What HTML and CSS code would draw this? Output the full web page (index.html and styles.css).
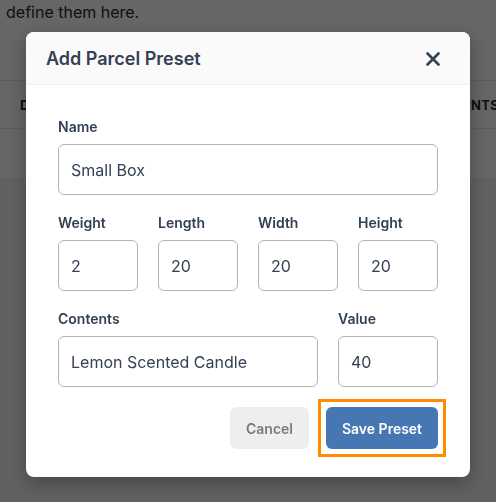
FILE: index.html
```html
<!DOCTYPE html>
<html>
<head>
<meta charset="utf-8">
<link rel="stylesheet" href="styles.css">
</head>
<body>
<div class="page">
  <p class="intro">define them here.</p>
  <div class="table">
    <div class="thead">
      <span>DIMENSIONS</span>
      <span class="last">CONTENTS</span>
    </div>
    <div class="trow"></div>
  </div>
</div>

<div class="overlay">
  <div class="modal">
    <div class="modal-header">
      <h2 class="modal-title">Add Parcel Preset</h2>
      <button class="close" aria-label="Close">
        <svg width="14" height="14" viewBox="0 0 14 14"><path d="M1.5 1.5 L12.5 12.5 M12.5 1.5 L1.5 12.5" stroke="#344054" stroke-width="2.6" stroke-linecap="round" fill="none"/></svg>
      </button>
    </div>
    <div class="modal-body">
      <div class="field">
        <label class="label">Name</label>
        <div class="input">Small Box</div>
      </div>
      <div class="grid4">
        <div class="field">
          <label class="label">Weight</label>
          <div class="input">2</div>
        </div>
        <div class="field">
          <label class="label">Length</label>
          <div class="input">20</div>
        </div>
        <div class="field">
          <label class="label">Width</label>
          <div class="input">20</div>
        </div>
        <div class="field">
          <label class="label">Height</label>
          <div class="input">20</div>
        </div>
      </div>
      <div class="grid2">
        <div class="field">
          <label class="label">Contents</label>
          <div class="input">Lemon Scented Candle</div>
        </div>
        <div class="field">
          <label class="label">Value</label>
          <div class="input">40</div>
        </div>
      </div>
      <div class="actions">
        <button class="btn btn-cancel">Cancel</button>
        <div class="focus-ring">
          <button class="btn btn-save">Save Preset</button>
        </div>
      </div>
    </div>
  </div>
</div>
</body>
</html>
```

FILE: styles.css
```css
* { box-sizing: border-box; }
html, body { margin: 0; padding: 0; }
body {
  width: 496px;
  height: 502px;
  overflow: hidden;
  background: #f1f2f4;
  font-family: Inter, "Noto Sans", sans-serif;
  color: #1f2937;
}
.page {
  background: #ffffff;
  height: 178px;
}
.intro {
  margin: 0;
  padding: 1px 0 0 6px;
  font-size: 16px;
  line-height: 22px;
  color: #1f2937;
}
.table {
  margin-top: 57px;
}
.thead {
  height: 49px;
  border-top: 1px solid #e5e7eb;
  border-bottom: 1px solid #e5e7eb;
  display: flex;
  justify-content: space-between;
  align-items: center;
  padding-left: 20px;
  font-size: 13px;
  font-weight: 700;
  color: #1f2937;
  letter-spacing: 0.3px;
}
.thead .last { margin-right: -3px; }
.overlay {
  position: fixed;
  inset: 0;
  background: rgba(0, 0, 0, 0.6);
  display: flex;
  justify-content: center;
  align-items: flex-start;
  padding-top: 32px;
}
.modal {
  width: 444px;
  background: #ffffff;
  border-radius: 8px;
  box-shadow: 0 6px 20px rgba(0, 0, 0, 0.3);
  overflow: hidden;
}
.modal-header {
  height: 53px;
  background: #fafafa;
  border-bottom: 1px solid #f1f1f1;
  display: flex;
  align-items: center;
  justify-content: space-between;
  padding: 2px 30px 0 20px;
}
.modal-title {
  margin: 0;
  font-size: 18px;
  font-weight: 600;
  color: #344054;
  line-height: 24px;
}
.close {
  border: 0;
  background: none;
  padding: 0;
  width: 14px;
  height: 14px;
  display: flex;
  margin-top: -1px;
}
.modal-body {
  padding: 32px 32px 28px;
}
.field {
  display: flex;
  flex-direction: column;
}
.label {
  font-size: 14px;
  line-height: 20px;
  font-weight: 600;
  color: #344054;
  margin-bottom: 7px;
}
.input {
  height: 51px;
  border: 1px solid #b3b3b3;
  border-radius: 6px;
  padding: 0 12px;
  display: flex;
  align-items: center;
  font-size: 16px;
  color: #344054;
}
.grid4 {
  display: grid;
  grid-template-columns: repeat(4, 80px);
  column-gap: 20px;
  margin-top: 18px;
}
.grid2 {
  display: grid;
  grid-template-columns: 260px 100px;
  column-gap: 20px;
  margin-top: 18px;
}
.actions {
  display: flex;
  justify-content: flex-end;
  align-items: center;
  gap: 17px;
  margin-top: 20px;
}
.btn {
  height: 42px;
  border: 0;
  border-radius: 6px;
  padding: 0 14px;
  font-family: Inter, "Noto Sans", sans-serif;
  font-size: 14px;
  font-weight: 600;
  white-space: nowrap;
}
.btn-cancel {
  width: 79px;
  background: #eceef0;
  color: #7b7b7b;
}
.focus-ring {
  border: 3px solid #ff8c00;
  padding: 5px;
  margin: -8px -8px -8px -8px;
  display: flex;
}
.btn-save {
  width: 112px;
  background: #4677b2;
  color: #ffffff;
}
```
